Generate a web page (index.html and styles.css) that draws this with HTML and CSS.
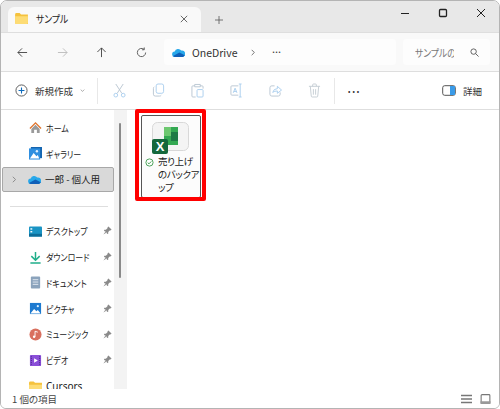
FILE: index.html
```html
<!DOCTYPE html>
<html lang="ja">
<head>
  <meta charset="UTF-8" />
  <title>サンプル</title>
  <link rel="stylesheet" href="styles.css">
</head>
<body>

<div class="window">

  <!-- Title bar -->
  <div class="titlebar">
    <div class="tab">
      <svg class="tab-icon" viewBox="0 0 14 12"><path d="M0 1.500Q0 0 1.500 0H5L6.500 1.500H14V12H1.500Q0 12 0 10.500Z" fill="#f5c23e"/><path d="M0 3.500H14V10.500Q14 12 12.500 12H1.500Q0 12 0 10.500Z" fill="#fddc75"/></svg>
      <span class="tab-title"><span class="narrow">サンプル</span></span>
      <svg class="tab-close" viewBox="0 0 10 10"><path d="M1 1L9 9M9 1L1 9" stroke="#444" fill="none"/></svg>
    </div>
    <svg class="tab-add" viewBox="0 0 10 10"><path d="M5 0V10M0 5H10" stroke="#555" fill="none"/></svg>
    <div class="win-buttons">
      <svg viewBox="0 0 10 10"><path d="M1 5.500H9" stroke="#222" stroke-width="1.200" fill="none"/></svg>
      <svg viewBox="0 0 10 10"><rect x="1.500" y="1.500" width="7" height="7" rx="1" stroke="#222" stroke-width="1.300" fill="none"/></svg>
      <svg viewBox="0 0 10 10"><path d="M1 1L9 9M9 1L1 9" stroke="#222" fill="none"/></svg>
    </div>
  </div>

  <!-- Navigation row -->
  <div class="navbar">
    <div class="nav-buttons">
      <svg viewBox="0 0 12 12"><path d="M11 6H1M5.500 1.500L1 6L5.500 10.500" stroke="#444" fill="none"/></svg>
      <svg viewBox="0 0 12 12"><path d="M1 6H11M6.500 1.500L11 6L6.500 10.500" stroke="#bbb" fill="none"/></svg>
      <svg viewBox="0 0 12 12"><path d="M6 11V1M1.500 5.500L6 1L10.500 5.500" stroke="#444" fill="none"/></svg>
      <svg viewBox="0 0 12 12"><path d="M10.500 6A4.500 4.500 0 1 1 8.800 2.500M9 0.500V3H6.500" stroke="#555" fill="none"/></svg>
    </div>
    <div class="address">
      <svg class="cloud" viewBox="0 0 14 10"><path d="M3 10A3 3 0 0 1 2.800 4A4 4 0 0 1 10 2.800A3.500 3.500 0 0 1 11.500 10Z" fill="#28a8ea"/><path d="M3 10A3 3 0 0 1 1 9L8 5L14 8Q13 10 11.500 10Z" fill="#0f5fb8"/></svg>
      <span class="address-text">OneDrive</span>
      <svg class="crumb" viewBox="0 0 6 10"><path d="M1 1L5 5L1 9" stroke="#333" fill="none"/></svg>
      <span class="crumb-more">•••</span>
    </div>
    <div class="search">
      <span class="search-text"><span class="narrow">サンプルの検索</span></span>
      <svg viewBox="0 0 10 10"><circle cx="4" cy="4" r="3" stroke="#555" fill="none"/><path d="M6.200 6.200L9.500 9.500" stroke="#555" fill="none"/></svg>
    </div>
  </div>

  <!-- Command bar -->
  <div class="toolbar">
    <div class="new-btn">
      <svg class="new-icon" viewBox="0 0 14 14"><circle cx="7" cy="7" r="6" stroke="#555" fill="#fff"/><path d="M7 3.800V10.200M3.800 7H10.200" stroke="#0f6cbd" stroke-width="1.200" fill="none"/></svg>
      <span>新規作成</span>
      <svg class="chevron" viewBox="0 0 8 5"><path d="M1 1L4 4L7 1" stroke="#777" fill="none"/></svg>
    </div>
    <div class="divider"></div>
    <div class="tools">
      <svg viewBox="0 0 14 16"><path d="M3 1L9.500 11M11 1L4.500 11" stroke="#b9c6d2" fill="none"/><circle cx="3" cy="13" r="2" stroke="#a9cdee" fill="none"/><circle cx="11" cy="13" r="2" stroke="#a9cdee" fill="none"/></svg>
      <svg viewBox="0 0 14 16"><rect x="4.500" y="1" width="8" height="10" rx="2" stroke="#a9cdee" fill="none"/><path d="M2.500 4Q1.500 4.500 1.500 6V12Q1.500 14 3.500 14H8Q9.500 14 10 13" stroke="#b9c6d2" fill="none"/></svg>
      <svg viewBox="0 0 14 16"><path d="M4 3H2Q1 3 1 4V14Q1 15 2 15H5M10 3H12Q13 3 13 4V6M4 1.500H10V4H4Z" stroke="#b9c6d2" fill="none"/><rect x="6.500" y="7" width="6.500" height="8" rx="1" stroke="#a9cdee" fill="none"/></svg>
      <svg viewBox="0 0 14 16"><path d="M9 3H2Q1 3 1 4V12Q1 13 2 13H9" stroke="#b9c6d2" fill="none"/><path d="M3.500 10.500L5.500 5.500L7.500 10.500M4.200 9H6.800M11 1V15M9.500 1H12.500M9.500 15H12.500" stroke="#a9cdee" fill="none"/></svg>
      <svg viewBox="0 0 14 16"><path d="M6 3H3Q1 3 1 5V12Q1 14 3 14H10Q12 14 12 12V10" stroke="#b9c6d2" fill="none"/><path d="M4 10Q5 6 9 6V3.500L13.500 7.500L9 11V8.500Q6 8.500 4 10Z" stroke="#a9cdee" fill="none"/></svg>
      <svg viewBox="0 0 14 16"><path d="M1 3.500H13M5 3.500V2Q5 1 6 1H8Q9 1 9 2V3.500M2.500 3.500L3.500 14Q3.600 15 4.500 15H9.500Q10.400 15 10.500 14L11.500 3.500M5.800 6.500V12.500M8.200 6.500V12.500" stroke="#c4ccd3" fill="none"/></svg>
    </div>
    <div class="divider"></div>
    <span class="more">•••</span>
    <div class="details">
      <svg viewBox="0 0 14 11"><rect x="0.700" y="0.700" width="12.600" height="9.600" rx="2" stroke="#555" fill="none"/><rect x="8" y="1" width="5" height="9" fill="#3a9be8"/></svg>
      <span>詳細</span>
    </div>
  </div>

  <!-- Main area -->
  <div class="main">
    <div class="sidebar">
      <div class="nav-item">
        <svg class="nav-icon" viewBox="0 0 14 14"><path d="M7 1L0.500 7.500L1.500 8.500L7 3L12.500 8.500L13.500 7.500Z" fill="#e0742c"/><path d="M2.500 8.500L7 4L11.500 8.500V13H8.500V9.500H5.500V13H2.500Z" fill="#9a9a9a"/></svg>
        <span class="narrow">ホーム</span>
      </div>
      <div class="nav-item">
        <svg class="nav-icon" viewBox="0 0 14 14"><rect x="2" y="0" width="12" height="12" fill="#1565b0"/><rect x="0" y="1.500" width="12" height="12" fill="#2f8fe0"/><path d="M1 12.500L5 6.500L8 10L9.500 8.500L11 12.500Z" fill="#fff"/><circle cx="8.500" cy="4.500" r="1.300" fill="#dff0ff"/></svg>
        <span class="narrow">ギャラリー</span>
      </div>
      <div class="nav-item selected">
        <svg class="expander" viewBox="0 0 5 9"><path d="M1 1L4.500 4.500L1 8" stroke="#777" fill="none"/></svg>
        <svg class="nav-icon" viewBox="0 0 14 10"><path d="M3 10A3 3 0 0 1 2.800 4A4 4 0 0 1 10 2.800A3.500 3.500 0 0 1 11.500 10Z" fill="#28a8ea"/><path d="M3 10A3 3 0 0 1 1 9L8 5L14 8Q13 10 11.500 10Z" fill="#0f5fb8"/></svg>
        <span>一郎 - 個人用</span>
      </div>
      <div class="nav-separator"></div>
      <div class="nav-item">
        <svg class="nav-icon" viewBox="0 0 14 11"><rect width="14" height="11" rx="1" fill="#1a94c4"/><rect y="8" width="14" height="3" fill="#0d6d99"/><rect x="1.500" y="2" width="2" height="1.500" fill="#fff"/><rect x="1.500" y="5" width="2" height="1.500" fill="#fff"/></svg>
        <span class="narrow">デスクトップ</span>
        <svg class="pin" viewBox="0 0 10 10"><path d="M6 0.500L9.500 4L8.500 5L7.800 4.800L5.800 6.800L5.800 8.500L5 9L1 5L1.500 4.200L3.200 4.200L5.200 2.200L5 1.500ZM2.800 6L0.500 9.500L4 7.200Z" fill="#8a8a8a"/></svg>
      </div>
      <div class="nav-item">
        <svg class="nav-icon" viewBox="0 0 14 14"><path d="M7 1V9.500M2.500 5.500L7 10L11.500 5.500" stroke="#1fae8a" stroke-width="1.600" fill="none"/><path d="M1.500 12.800H12.500" stroke="#1fae8a" stroke-width="1.600"/></svg>
        <span class="narrow">ダウンロード</span>
        <svg class="pin" viewBox="0 0 10 10"><path d="M6 0.500L9.500 4L8.500 5L7.800 4.800L5.800 6.800L5.800 8.500L5 9L1 5L1.500 4.200L3.200 4.200L5.200 2.200L5 1.500ZM2.800 6L0.500 9.500L4 7.200Z" fill="#8a8a8a"/></svg>
      </div>
      <div class="nav-item">
        <svg class="nav-icon" viewBox="0 0 14 14"><rect x="2" y="0.500" width="10" height="13" rx="1" fill="#8ba3bc"/><path d="M4 4H10M4 6.500H10M4 9H10" stroke="#e4ebf2"/></svg>
        <span class="narrow">ドキュメント</span>
        <svg class="pin" viewBox="0 0 10 10"><path d="M6 0.500L9.500 4L8.500 5L7.800 4.800L5.800 6.800L5.800 8.500L5 9L1 5L1.500 4.200L3.200 4.200L5.200 2.200L5 1.500ZM2.800 6L0.500 9.500L4 7.200Z" fill="#8a8a8a"/></svg>
      </div>
      <div class="nav-item">
        <svg class="nav-icon" viewBox="0 0 14 14"><rect x="1" y="1" width="12" height="12" fill="#1d7ad0"/><path d="M1.500 12.500L5.500 7.500L8 10L9.500 8.500L12.500 12.500Z" fill="#fff"/><circle cx="9.500" cy="4.500" r="1.200" fill="#dff0ff"/></svg>
        <span class="narrow">ピクチャ</span>
        <svg class="pin" viewBox="0 0 10 10"><path d="M6 0.500L9.500 4L8.500 5L7.800 4.800L5.800 6.800L5.800 8.500L5 9L1 5L1.500 4.200L3.200 4.200L5.200 2.200L5 1.500ZM2.800 6L0.500 9.500L4 7.200Z" fill="#8a8a8a"/></svg>
      </div>
      <div class="nav-item">
        <svg class="nav-icon" viewBox="0 0 14 14"><circle cx="7" cy="7" r="6.500" fill="#d9705f"/><path d="M6.500 9.500V3.500L9.500 4.500" stroke="#fff" fill="none"/><circle cx="5.500" cy="9.500" r="1.300" fill="#fff"/></svg>
        <span class="narrow">ミュージック</span>
        <svg class="pin" viewBox="0 0 10 10"><path d="M6 0.500L9.500 4L8.500 5L7.800 4.800L5.800 6.800L5.800 8.500L5 9L1 5L1.500 4.200L3.200 4.200L5.200 2.200L5 1.500ZM2.800 6L0.500 9.500L4 7.200Z" fill="#8a8a8a"/></svg>
      </div>
      <div class="nav-item">
        <svg class="nav-icon" viewBox="0 0 14 14"><rect x="1" y="1" width="12" height="12" rx="1" fill="#8a4fd8"/><path d="M5.500 4.500L9.500 7L5.500 9.500Z" fill="#fff"/><path d="M2.500 2.500V11.500M11.500 2.500V11.500" stroke="#3c1f78" stroke-dasharray="1 1"/></svg>
        <span class="narrow">ビデオ</span>
        <svg class="pin" viewBox="0 0 10 10"><path d="M6 0.500L9.500 4L8.500 5L7.800 4.800L5.800 6.800L5.800 8.500L5 9L1 5L1.500 4.200L3.200 4.200L5.200 2.200L5 1.500ZM2.800 6L0.500 9.500L4 7.200Z" fill="#8a8a8a"/></svg>
      </div>
      <div class="nav-item">
        <svg class="nav-icon" viewBox="0 0 14 11"><path d="M0 1.500Q0 0 1.500 0H5L6.500 1.500H14V11H0Z" fill="#f5c23e"/><path d="M0 3.500H14V11H0Z" fill="#fddc75"/></svg>
        <span class="latin">Cursors</span>
      </div>
    </div>

    <div class="scrollbar"><div class="thumb"></div></div>

    <div class="content">
      <div class="file">
        <svg class="file-icon" viewBox="0 0 50 33">
          <rect x="5.500" y="0.500" width="36" height="28" rx="5" fill="#f4f4f4" stroke="#d8d8d8"/>
          <rect x="17" y="5" width="14" height="18" fill="#33a852"/>
          <rect x="17" y="5" width="7" height="9" fill="#6cc86f"/>
          <rect x="24" y="10" width="7" height="9" fill="#1e7a45"/>
          <rect x="5" y="17" width="16" height="15" rx="2" fill="#14683c"/>
          <text x="13" y="29" class="excel-x">X</text>
        </svg>
        <div class="file-label">
          <svg class="sync" viewBox="0 0 10 10"><circle cx="5" cy="5" r="4" stroke="#3a9a4a" fill="#fff"/><path d="M3 5.200L4.500 6.500L7 3.800" stroke="#3a9a4a" fill="none"/></svg>
          <span>売り上げ<br>のバックア<br>ップ</span>
        </div>
      </div>
      <div class="highlight"></div>
    </div>
  </div>

  <!-- Status bar -->
  <div class="statusbar">
    <span>1 個の項目</span>
    <div class="view-buttons">
      <svg viewBox="0 0 11 9"><path d="M0 1H11M0 4.500H11M0 8H11" stroke="#777" stroke-width="1.300"/></svg>
      <svg viewBox="0 0 11 11"><rect x="0.700" y="0.700" width="9.600" height="9.600" rx="1" stroke="#777" stroke-width="1.200" fill="#fff"/><rect x="0" y="8" width="11" height="3" fill="#999"/></svg>
    </div>
  </div>

</div>

</body>
</html>
```

FILE: styles.css
```css
* {
  box-sizing: border-box;
}

html,
body {
  margin: 0;
  padding: 0;
  background-color: #fff;
}

body {
  width: 500px;
  height: 409px;
  overflow: hidden;
  font-family: "Noto Sans CJK JP", "Noto Sans", sans-serif;
  font-size: 10px;
  font-feature-settings: "palt";
  color: #222;
}

svg {
  display: block;
  flex: none;
}

/* the reference kana are set tighter than Noto's */
.narrow {
  display: inline-block;
  transform: scaleX(0.84);
  transform-origin: left center;
}

.window {
  width: 500px;
  height: 409px;
  display: flex;
  flex-direction: column;
  border: 1px solid #b4b4b4;
  border-radius: 7px 7px 6px 6px;
  overflow: hidden;
  background-color: #fff;
}

/* title bar */

.titlebar {
  height: 31px;
  flex: none;
  display: flex;
  align-items: flex-end;
  padding-left: 7px;
  background-color: #e8e8e8;
}

.tab {
  width: 193px;
  height: 25px;
  display: flex;
  align-items: center;
  padding: 0 0 2px 7px;
  background-color: #f9f9f9;
  border-radius: 6px 6px 0 0;
}

.tab-icon {
  width: 13px;
  height: 11px;
}

.tab-title {
  margin-left: 8px;
  flex: 1;
  font-size: 10.500px;
}

.tab-close {
  width: 8px;
  height: 8px;
  margin-right: 13px;
}

.tab-add {
  width: 8px;
  height: 8px;
  margin: 0 0 8px 14px;
}

.win-buttons {
  margin-left: auto;
  height: 30px;
  align-self: flex-start;
  display: flex;
  align-items: center;
  gap: 28px;
  padding: 0 13px 6px 0;
}

.win-buttons svg {
  width: 10px;
  height: 10px;
}

/* navigation row */

.navbar {
  height: 40px;
  flex: none;
  display: flex;
  align-items: center;
  background-color: #f9f9f9;
  border-top: 1px solid #dedede;
  border-bottom: 1px solid #dedede;
  padding-left: 16px;
}

.nav-buttons {
  width: 147px;
  display: flex;
  gap: 28.500px;
}

.nav-buttons svg {
  width: 11px;
  height: 11px;
}

.address {
  width: 232px;
  height: 26px;
  display: flex;
  align-items: center;
  padding-left: 8px;
  background-color: #fdfdfd;
  border-radius: 4px;
}

.cloud {
  width: 13px;
  height: 9px;
}

.address-text {
  margin-left: 7px;
  font-size: 10.500px;
  color: #333;
}

.crumb {
  width: 4px;
  height: 7px;
  margin-left: 14px;
}

.crumb-more {
  margin-left: 17px;
  font-size: 6px;
  letter-spacing: 1px;
  line-height: 1;
  color: #444;
}

.search {
  width: 87px;
  height: 26px;
  margin-left: 7px;
  display: flex;
  align-items: center;
  padding-left: 12px;
  background-color: #fdfdfd;
  border-radius: 4px;
}

.search-text {
  width: 39px;
  overflow: hidden;
  white-space: nowrap;
  font-size: 10.500px;
  color: #777;
}

.search svg {
  width: 9px;
  height: 9px;
  margin-left: 16px;
}

/* command bar */

.toolbar {
  height: 38px;
  flex: none;
  display: flex;
  align-items: center;
  border-bottom: 1px solid #dedede;
  padding-left: 14px;
}

.new-btn {
  width: 82px;
  display: flex;
  align-items: center;
  font-size: 9.500px;
  font-feature-settings: normal;
  color: #333;
}

.new-icon {
  width: 13px;
  height: 13px;
  margin-right: 7px;
}

.chevron {
  width: 5px;
  height: 3px;
  margin-left: 7px;
}

.divider {
  width: 1px;
  height: 26px;
  background-color: #e8e8e8;
}

.tools {
  width: 236px;
  display: flex;
  gap: 26px;
  padding-left: 15px;
}

.tools svg {
  width: 13px;
  height: 15px;
}

.more {
  margin-left: 13px;
  font-size: 7px;
  letter-spacing: 2px;
  color: #333;
}

.details {
  margin-left: auto;
  display: flex;
  align-items: center;
  gap: 7px;
  padding-right: 17px;
  font-size: 9.500px;
  color: #333;
}

.details svg {
  width: 14px;
  height: 11px;
}

/* main area */

.main {
  flex: 1;
  min-height: 0;
  display: flex;
}

.sidebar {
  width: 113px;
  flex: none;
  padding: 5px 0 0 1px;
  overflow: hidden;
}

.nav-item {
  height: 25.800px;
  display: flex;
  align-items: center;
  position: relative;
  padding-left: 27px;
  white-space: nowrap;
  font-size: 9.500px;
}

.nav-item.selected {
  background-color: #d9d9d9;
  border: 1px solid #a8a8a8;
  border-radius: 2px;
  padding-left: 9px;
}

.expander {
  width: 4px;
  height: 7px;
  margin-right: 12px;
}

.nav-icon {
  width: 13px;
  height: 13px;
  margin-right: 4px;
}

.selected .nav-icon {
  height: 9px;
}

.latin {
  font-family: "Noto Sans", sans-serif;
  font-size: 10px;
}

.pin {
  width: 9px;
  height: 9px;
  position: absolute;
  left: 101px;
  top: 8px;
}

.nav-separator {
  height: 1px;
  margin: 14px 6px 11px 8px;
  background-color: #dedede;
}

.scrollbar {
  width: 13px;
  flex: none;
  background-color: #f3f3f3;
  padding: 13px 0 0 5px;
}

.thumb {
  width: 2px;
  height: 155px;
  background-color: #8a8a8a;
  border-radius: 1px;
}

.content {
  flex: 1;
  position: relative;
  padding: 5px 0 0 14px;
}

.file {
  width: 60px;
  height: 83px;
  border: 1px solid #555;
  border-radius: 2px;
  padding: 6px 0 0 0;
  background-color: #fcfcfc;
}

.file-icon {
  width: 50px;
  height: 33px;
  margin-left: 5px;
}

.excel-x {
  font-family: "Liberation Sans", sans-serif;
  font-size: 13px;
  font-weight: bold;
  fill: #fff;
  text-anchor: middle;
}

.file-label {
  position: relative;
  padding-left: 16px;
  white-space: nowrap;
  font-size: 9.500px;
  line-height: 13px;
}

.file-label span {
  display: block;
  letter-spacing: -0.400px;
}

.sync {
  width: 9px;
  height: 9px;
  position: absolute;
  left: 3px;
  top: 3px;
}

.highlight {
  position: absolute;
  left: 8px;
  top: -1px;
  width: 71px;
  height: 92px;
  border: 4px solid #f00;
  border-radius: 2px;
}

/* status bar */

.statusbar {
  height: 19px;
  flex: none;
  display: flex;
  align-items: center;
  justify-content: space-between;
  padding: 0 8px 0 11px;
  background-color: #fff;
  font-size: 9.500px;
  color: #444;
}

.view-buttons {
  display: flex;
  align-items: center;
  gap: 8px;
}

.view-buttons svg {
  width: 11px;
  height: 10px;
}
```
